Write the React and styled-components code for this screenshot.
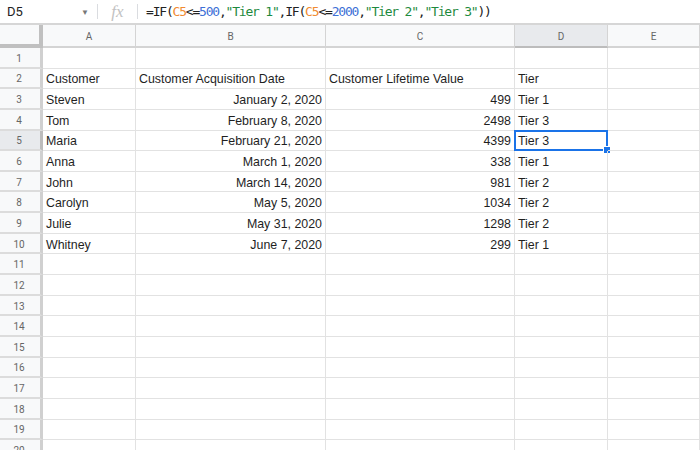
import React from "react";
import styled, { createGlobalStyle } from "styled-components";

const GlobalStyle = createGlobalStyle`
  body {
    margin: 0;
    background: #fff;
    font-family: "Liberation Sans", Arial, sans-serif;
    overflow: hidden;
  }
`;

const COLS = ["A", "B", "C", "D", "E"];

const rows = [
  [],
  ["Customer", "Customer Acquisition Date", "Customer Lifetime Value", "Tier"],
  ["Steven", "January 2, 2020", 499, "Tier 1"],
  ["Tom", "February 8, 2020", 2498, "Tier 3"],
  ["Maria", "February 21, 2020", 4399, "Tier 3"],
  ["Anna", "March 1, 2020", 338, "Tier 1"],
  ["John", "March 14, 2020", 981, "Tier 2"],
  ["Carolyn", "May 5, 2020", 1034, "Tier 2"],
  ["Julie", "May 31, 2020", 1298, "Tier 2"],
  ["Whitney", "June 7, 2020", 299, "Tier 1"],
];

const Page = styled.div`
  width: 700px;
  height: 450px;
  overflow: hidden;
  display: flex;
  flex-direction: column;
`;

const FormulaBar = styled.div`
  height: 23px;
  border-bottom: 2px solid #d6d6d6;
  display: flex;
  align-items: center;
  flex-shrink: 0;
`;

const NameBox = styled.div`
  width: 97px;
  box-sizing: border-box;
  padding: 0 8px 0 7px;
  display: flex;
  align-items: center;
  justify-content: space-between;
  font-family: Roboto, "Liberation Sans", sans-serif;
  font-size: 13px;
  color: #222;
`;

const Caret = styled.span`
  font-size: 8px;
  color: #777;
  margin-top: 2px;
`;

const Divider = styled.div`
  width: 1px;
  height: 15px;
  background: #dadce0;
`;

const Fx = styled.div`
  width: 39px;
  text-align: center;
  font-family: "Liberation Serif", serif;
  font-style: italic;
  font-size: 17px;
  color: #c2c2c2;
  line-height: 1;
`;

const Formula = styled.div`
  padding-left: 8px;
  font-family: "DejaVu Sans Mono", monospace;
  font-size: 13px;
  letter-spacing: -1.2px;
  color: #222;
  white-space: nowrap;
`;

const Tok = styled.span`
  color: ${(p) =>
    p.$kind === "ref" ? "#f08b32" : p.$kind === "num" ? "#3d70d6" : p.$kind === "str" ? "#1e8a3e" : "#222"};
`;

const Sheet = styled.div`
  display: grid;
  grid-template-columns: 43px 93px 190px 189px 93px 1fr;
  grid-template-rows: 23px repeat(20, 20.65px);
`;

const Corner = styled.div`
  background: #f8f9fa;
  border-right: 4px solid #c0c0c0;
  border-bottom: 4px solid #c0c0c0;
  box-sizing: border-box;
`;

const ColHead = styled.div`
  background: ${(p) => (p.$active ? "#e8eaed" : "#f8f9fa")};
  border-right: 1px solid #d4d4d4;
  border-bottom: 2px solid ${(p) => (p.$active ? "#bcbcbc" : "#d4d4d4")};
  box-sizing: border-box;
  display: flex;
  align-items: center;
  justify-content: center;
  padding-top: 1px;
  font-family: Roboto, "Liberation Sans", sans-serif;
  font-size: 10px;
  color: #666;
`;

const RowHead = styled.div`
  background: ${(p) => (p.$active ? "#e8eaed" : "#f8f9fa")};
  border-right: 3px solid ${(p) => (p.$active ? "#bcbcbc" : "#d0d0d0")};
  border-bottom: 2px solid #dcdcdc;
  box-sizing: border-box;
  display: flex;
  align-items: center;
  justify-content: center;
  padding: 2px 2px 0 0;
  font-family: Roboto, "Liberation Sans", sans-serif;
  font-size: 10px;
  color: #666;
`;

const Cell = styled.div`
  position: relative;
  border-right: 1px solid #e2e2e2;
  border-bottom: 1px solid #e2e2e2;
  box-sizing: border-box;
  display: flex;
  align-items: center;
  justify-content: ${(p) => (p.$right ? "flex-end" : "flex-start")};
  padding: 2px 3px 0;
  font-size: 12.4px;
  color: #1f1f1f;
  white-space: nowrap;
`;

const Selection = styled.div`
  position: absolute;
  left: -1px;
  top: -1px;
  right: -1px;
  bottom: -1px;
  border: 2px solid #1a73e8;
  pointer-events: none;
`;

const Handle = styled.div`
  position: absolute;
  right: -5px;
  bottom: -5px;
  width: 6px;
  height: 6px;
  background: #1a73e8;
  border: 1px solid #fff;
`;

const formula = [
  ["=IF(", ""],
  ["C5", "ref"],
  ["<=", ""],
  ["500", "num"],
  [",", ""],
  ['"Tier 1"', "str"],
  [",IF(", ""],
  ["C5", "ref"],
  ["<=", ""],
  ["2000", "num"],
  [",", ""],
  ['"Tier 2"', "str"],
  [",", ""],
  ['"Tier 3"', "str"],
  ["))", ""],
];

export default function App() {
  return (
    <Page>
      <GlobalStyle />
      <FormulaBar>
        <NameBox>
          D5 <Caret>▼</Caret>
        </NameBox>
        <Divider />
        <Fx>fx</Fx>
        <Divider />
        <Formula>
          {formula.map(([t, k], i) => (
            <Tok key={i} $kind={k}>
              {t}
            </Tok>
          ))}
        </Formula>
      </FormulaBar>
      <Sheet>
        <Corner />
        {COLS.map((c) => (
          <ColHead key={c} $active={c === "D"}>
            {c}
          </ColHead>
        ))}
        {Array.from({ length: 20 }, (_, r) => {
          const data = rows[r] || [];
          const n = r + 1;
          return (
            <React.Fragment key={n}>
              <RowHead $active={n === 5}>{n}</RowHead>
              {COLS.map((c, ci) => {
                const v = data[ci];
                const right = n > 2 && (ci === 1 || ci === 2);
                return (
                  <Cell key={c} $right={right}>
                    {v}
                    {n === 5 && c === "D" && (
                      <Selection>
                        <Handle />
                      </Selection>
                    )}
                  </Cell>
                );
              })}
            </React.Fragment>
          );
        })}
      </Sheet>
    </Page>
  );
}
